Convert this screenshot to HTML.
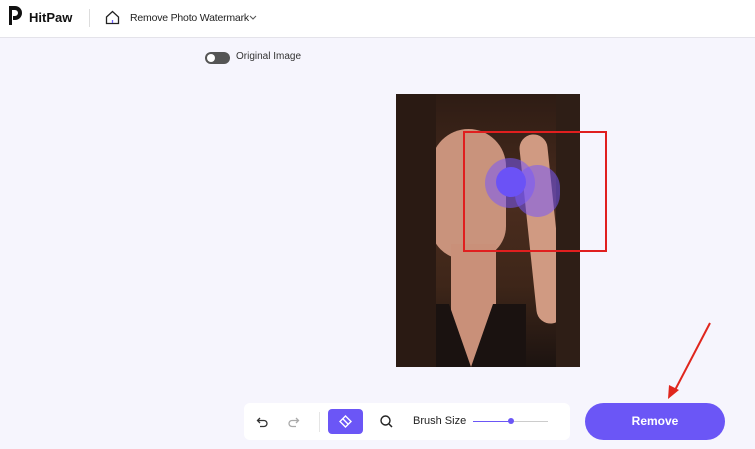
<!DOCTYPE html>
<html><head><style>
body{margin:0;width:755px;height:449px;background:#f6f5fd;font-family:"Liberation Sans",sans-serif;position:relative;overflow:hidden}
.hdr{position:absolute;left:0;top:0;width:755px;height:37px;background:#fff;border-bottom:1px solid #e4e3ea}
.abs{position:absolute}
</style></head><body>
<div class="hdr">
 <svg class="abs" style="left:7px;top:5px" width="16" height="22" viewBox="0 0 16 22"><path d="M2 1h6a7 7 0 0 1 0 14H6v-4h2a3 3 0 0 0 0-6H5v15H2z" fill="#111"/></svg>
 <div class="abs" style="left:29px;top:10px;font-weight:bold;font-size:13px;color:#111">HitPaw</div>
 <div class="abs" style="left:89px;top:9px;width:1px;height:18px;background:#ddd"></div>
 <svg class="abs" style="left:105px;top:10px" width="15" height="15" viewBox="0 0 15 15"><path d="M1.5 7 7.5 1.5 13.5 7v6.5h-12z" fill="none" stroke="#222" stroke-width="1.3"/><path d="M7.5 10v3" stroke="#6b5cf6" stroke-width="1.3"/></svg>
 <div class="abs" style="left:130px;top:12px;font-size:10.5px;color:#222;letter-spacing:-0.2px">Remove Photo Watermark</div>
 <svg class="abs" style="left:249px;top:15px" width="8" height="6"><path d="M1 1l3 3 3-3" fill="none" stroke="#555"/></svg>
</div>
<div class="abs" style="left:205px;top:52px;width:25px;height:12px;border-radius:6px;background:#555"></div>
<div class="abs" style="left:207px;top:54px;width:8px;height:8px;border-radius:4px;background:#fff"></div>
<div class="abs" style="left:236px;top:51px;font-size:10px;color:#333">Original Image</div>

<div class="abs" style="left:396px;top:94px;width:184px;height:273px;overflow:hidden;background:linear-gradient(180deg,#2e1c14 0,#4a2c1e 40%,#3e2619 70%,#1c1310 100%)">
 <div class="abs" style="left:35px;top:35px;width:75px;height:130px;border-radius:40px 40px 35px 35px;background:#c9937c"></div>
 <div class="abs" style="left:55px;top:150px;width:45px;height:123px;background:#c99079"></div>
 <div class="abs" style="left:20px;top:210px;width:110px;height:70px;background:#1a1210;clip-path:polygon(0 0,30% 0,50% 90%,70% 0,100% 0,100% 100%,0 100%)"></div>
 <div class="abs" style="left:132px;top:40px;width:28px;height:190px;background:#d09a82;border-radius:14px;transform:rotate(-6deg)"></div>
 <div class="abs" style="left:0;top:0;width:40px;height:273px;background:#2a1a13"></div>
 <div class="abs" style="left:160px;top:0;width:24px;height:273px;background:#2e1e16"></div>
</div>
<div class="abs" style="left:485px;top:158px;width:50px;height:50px;border-radius:25px;background:rgba(120,90,250,.55)"></div>
<div class="abs" style="left:515px;top:165px;width:45px;height:52px;border-radius:24px;background:rgba(120,90,250,.55)"></div>
<div class="abs" style="left:496px;top:167px;width:30px;height:30px;border-radius:15px;background:#6b52f6"></div>
<div class="abs" style="left:463px;top:131px;width:140px;height:117px;border:2px solid #e01f1f"></div>

<svg class="abs" style="left:660px;top:320px" width="55" height="80"><path d="M50 3 14 72" stroke="#e0261d" stroke-width="2"/><path d="M8 79l1-14 10 5z" fill="#e0261d"/></svg>

<div class="abs" style="left:244px;top:403px;width:326px;height:37px;background:#fff;border-radius:6px"></div>
<svg class="abs" style="left:256px;top:415px" width="14" height="14" viewBox="0 0 14 14"><path d="M4 3 1.5 5.5 4 8M2 5.5h6a3 3 0 0 1 0 6H4" fill="none" stroke="#333" stroke-width="1.3"/></svg>
<svg class="abs" style="left:286px;top:415px" width="14" height="14" viewBox="0 0 14 14"><path d="M10 3l2.5 2.5L10 8M12 5.5H6a3 3 0 0 0 0 6h4" fill="none" stroke="#aaa" stroke-width="1.3"/></svg>
<div class="abs" style="left:319px;top:412px;width:1px;height:20px;background:#e5e5e5"></div>
<div class="abs" style="left:328px;top:409px;width:35px;height:25px;background:#6b56f6;border-radius:4px"></div>
<svg class="abs" style="left:338px;top:414px" width="15" height="15" viewBox="0 0 15 15"><path d="M7.5 2 13 7.5 7.5 13 2 7.5z" fill="none" stroke="#fff" stroke-width="1.4"/><path d="M4.8 4.8l5.4 5.4" stroke="#fff" stroke-width="1.4"/></svg>
<svg class="abs" style="left:379px;top:414px" width="15" height="15" viewBox="0 0 15 15"><circle cx="6.5" cy="6.5" r="4.5" fill="none" stroke="#222" stroke-width="1.4"/><path d="M10 10l3 3" stroke="#222" stroke-width="1.5"/></svg>
<div class="abs" style="left:413px;top:415px;font-size:11px;color:#222">Brush Size</div>
<div class="abs" style="left:473px;top:421px;width:38px;height:1px;background:#6b56f6"></div>
<div class="abs" style="left:511px;top:421px;width:37px;height:1px;background:#ccc"></div>
<div class="abs" style="left:508px;top:418px;width:6px;height:6px;border-radius:3px;background:#6b56f6"></div>

<div class="abs" style="left:585px;top:403px;width:140px;height:37px;border-radius:19px;background:#6b56f6;color:#fff;font-weight:bold;font-size:12px;text-align:center;line-height:37px">Remove</div>
</body></html>
